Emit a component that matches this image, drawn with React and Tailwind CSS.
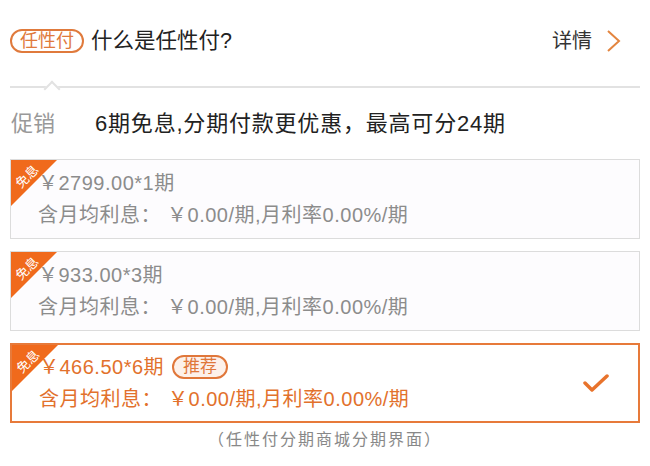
import React from "react";

const plans = [
  { price: "￥2799.00*1期", active: false },
  { price: "￥933.00*3期", active: false },
  { price: "￥466.50*6期", active: true, tag: "推荐" },
];

const PlanCard = ({ plan }) => {
  const text = plan.active ? "text-[#e2712c]" : "text-[#8c8c8c]";
  return (
    <div
      className={`relative h-[80px] border overflow-hidden flex items-center ${
        plan.active ? "border-[#e77a3a] border-2 bg-white" : "border-[#dcdcdc] bg-[#fdfcfe]"
      }`}
    >
      {/* corner ribbon */}
      <div className="absolute left-0 top-0 w-[46px] h-[46px] bg-[#f06a1c] [clip-path:polygon(0_0,100%_0,0_100%)]" />
      <span className="absolute left-[3px] top-[10px] -rotate-45 text-white text-[13px] leading-none">
        免息
      </span>
      <div className={`flex-1 pl-[27px] tracking-[0.5px] ${text}`}>
        <div className="flex items-center h-[26px] text-[20px] leading-[26px]">
          <span>{plan.price}</span>
          {plan.tag && (
            <span className="ml-[8px] h-[24px] px-[9px] rounded-full border-2 border-[#e0773a] bg-[#fdf1ea] text-[17px] leading-[20px] tracking-normal text-[#e0773a]">
              {plan.tag}
            </span>
          )}
        </div>
        <div className="mt-[6px] h-[26px] text-[20px] leading-[26px]">
          含月均利息： ￥0.00/期,月利率0.00%/期
        </div>
      </div>
      {plan.active && (
        <svg width="26" height="20" viewBox="0 0 26 20" className="mr-[29px]">
          <polyline
            points="2,10 9,17 24,3"
            fill="none"
            stroke="#e8732c"
            strokeWidth="3.5"
            strokeLinecap="round"
            strokeLinejoin="round"
          />
        </svg>
      )}
    </div>
  );
};

export default function App() {
  return (
    <div className="w-[650px] h-[466px] bg-white overflow-hidden font-['Liberation_Sans','Noto_Sans_CJK_SC',sans-serif]">
      <div className="h-[82px] flex items-center px-[10px]">
        <span className="h-[24px] px-[8px] rounded-full border-2 border-[#e07a3c] text-[#e07a3c] text-[18px] leading-[20px]">
          任性付
        </span>
        <span className="ml-[7px] text-[21.5px] text-[#222]">什么是任性付?</span>
        <span className="ml-auto text-[20px] text-[#333]">详情</span>
        <svg width="16" height="24" viewBox="0 0 16 24" className="ml-[14px] mr-[18px]">
          <polyline points="2,2 13,12 2,22" fill="none" stroke="#e3853f" strokeWidth="2" />
        </svg>
      </div>

      <div className="relative mx-[10px] h-[6px] border-b-2 border-[#e2e2e2]">
        <div className="absolute left-[36px] top-[1px] w-[12px] h-[12px] rotate-45 bg-white border-l-2 border-t-2 border-[#e2e2e2]" />
      </div>

      <div className="h-[70px] flex items-center px-[11px] text-[22px]">
        <span className="w-[84px] text-[#999]">促销</span>
        <span className="text-[#222] tracking-[0.8px]">6期免息,分期付款更优惠，最高可分24期</span>
      </div>

      <div className="mx-[10px] mt-[1px] flex flex-col gap-[12px]">
        {plans.map((p) => (
          <PlanCard key={p.price} plan={p} />
        ))}
      </div>

      <div className="mt-[5px] text-center text-[16px] tracking-[2px] text-[#888]">
        （任性付分期商城分期界面）
      </div>
    </div>
  );
}
